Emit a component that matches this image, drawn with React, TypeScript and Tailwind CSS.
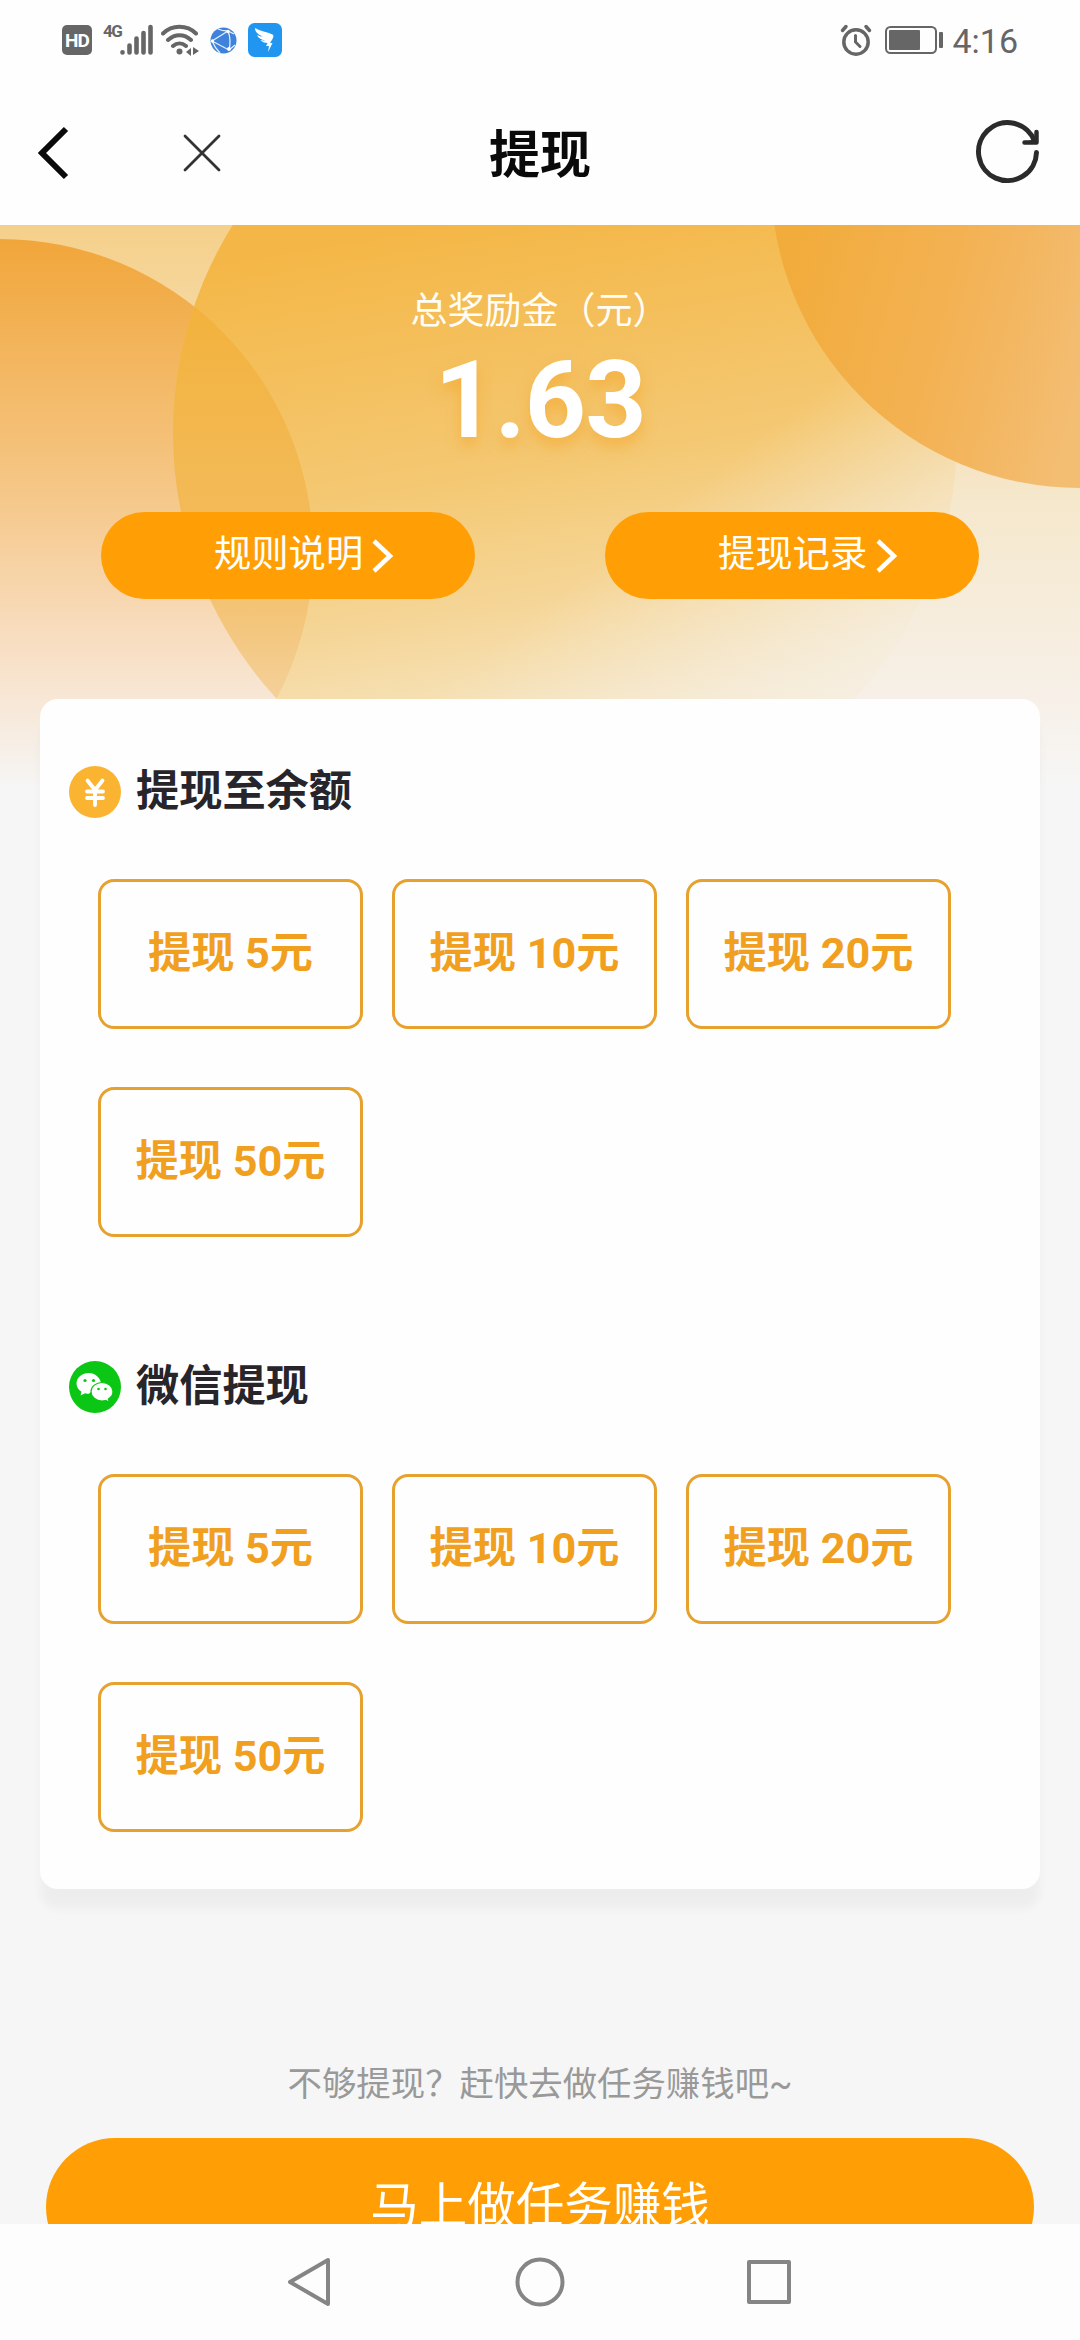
import type { ReactNode } from 'react';

const AMOUNTS = [5, 10, 20, 50];

function StatusBar() {
    return (
        <div className="flex h-20 items-center justify-between pl-[62px] pr-[62px] text-[#666]">
            <div className="flex items-center">
                <div className="flex h-[30px] w-[30px] items-center justify-center rounded-[5px] bg-[#666] text-[19px] leading-none font-bold tracking-[-1px] text-white">HD</div>
                <div className="ml-[11px] h-[30px] w-[17px] text-[17px] leading-[13px] font-bold tracking-[-1.500px]">4G</div>
                <svg width="34" height="32" viewBox="0 0 34 32" stroke="currentColor" strokeWidth="4.600" strokeLinecap="round">
                    <path d="M2.500 28.500v-.2M9.500 28.500v-7M16.500 28.500v-14M23.500 28.500V9M30.500 28.500V3" />
                </svg>
                <svg className="ml-[7px]" width="38" height="32" viewBox="0 0 38 32" fill="none" stroke="currentColor" strokeWidth="4" strokeLinecap="round">
                    <path d="M2 9.500C11 .500 26 .500 35 9.500M7 16C14 9.500 23 9.500 30 16M12 22C16 18.500 21 18.500 25 22" />
                    <circle cx="18.500" cy="27.500" r="3" fill="currentColor" stroke="none" />
                    <path d="M30 24v8l-5-4zM32 23v8l6-4z" fill="currentColor" stroke="none" />
                </svg>
                <svg className="ml-[11px]" width="27" height="27" viewBox="0 0 27 27">
                    <circle cx="13.500" cy="13.500" r="13" fill="#3f82db" />
                    <path d="M2 14L18 4M2 14l17 9M18 4q3.500 9 1 19M8 2q4 2 10 2l6 3M2 14q3 7 8 12M19 23l6-5" fill="none" stroke="#e3efff" strokeWidth="1.300" />
                    <g fill="#fff"><circle cx="2.500" cy="14" r="1.700" /><circle cx="18" cy="4.500" r="1.700" /><circle cx="19" cy="22" r="1.900" /></g>
                </svg>
                <svg className="ml-[11px]" width="34" height="34" viewBox="0 0 34 34">
                    <rect width="34" height="34" rx="6.500" fill="#2196f0" />
                    <path d="M7 5c5 3 12 4 17.500 6.500 1.500.8 1 2.500 0 4.500l-2.500 4h2.500L20 29l1-6h-3l1.500-3c-3 0-5.500-1-7-3 2 .5 4 .5 5 .5C13 16.500 10 15 9 12c2 1 4 1.500 6 1.500C10 11.500 7 9 7 5z" fill="#fff" />
                </svg>
            </div>
            <div className="flex items-center">
                <svg width="32" height="32" viewBox="0 0 32 32" fill="none" stroke="currentColor" strokeWidth="3.500" strokeLinecap="round">
                    <circle cx="16" cy="18" r="12.200" />
                    <path d="M15.500 11.500V18l4.500 4.500" strokeWidth="3" />
                    <path d="M2.500 6.500l3.500-4M26 2.500l3.500 4" />
                </svg>
                <svg className="ml-[13px]" width="58" height="28" viewBox="0 0 58 28">
                    <rect x="1" y="1" width="50" height="26" rx="4.500" fill="none" stroke="currentColor" strokeWidth="2" />
                    <rect x="4" y="4" width="31" height="20" rx="1" fill="currentColor" />
                    <rect x="54" y="6" width="4" height="16" rx="1" fill="currentColor" />
                </svg>
                <span className="mt-[2px] ml-[9px] text-[34px] leading-none">4:16</span>
            </div>
        </div>
    );
}

function TitleBar() {
    return (
        <header className="grid h-[145px] grid-cols-3 items-center pr-[38px] pl-[38px]">
            <div className="flex items-center">
                <svg width="34" height="54" viewBox="0 0 34 54" fill="none" stroke="#0a0a0a" strokeWidth="6">
                    <path d="M28 3L4 27l24 24" />
                </svg>
                <svg className="ml-[111px]" width="38" height="38" viewBox="0 0 38 38" fill="none" stroke="#333" strokeWidth="2.800" strokeLinecap="round">
                    <path d="M2 2l34 34M36 2L2 36" />
                </svg>
            </div>
            <h1 className="pt-[5px] text-center text-[51px] leading-none font-bold text-[#0a0a0a]">提现</h1>
            <svg className="justify-self-end" width="66" height="66" viewBox="0 0 66 66" fill="none" stroke="#2b2b2b" strokeWidth="5" strokeLinecap="round" strokeLinejoin="round">
                <path d="M60.500 32.500A29 29 0 1 1 58.500 21" />
                <path d="M60.500 12v10.500H48.500M60.500 12" strokeWidth="4.500" />
                <path d="M61 14v8.500h-10l6-2z" fill="#2b2b2b" strokeWidth="2" />
            </svg>
        </header>
    );
}

// 头图背景：三个渐变圆
function HeroBackground() {
    return (
        <svg className="absolute top-0 left-0" width="1080" height="560" viewBox="0 225 1080 560">
            <defs>
                <linearGradient id="base" x1="0" y1="0" x2="0" y2="1">
                    <stop offset="0" stopColor="#f5d08a" />
                    <stop offset="0.5" stopColor="#f5e8cd" />
                    <stop offset="0.85" stopColor="#f7f0e8" />
                    <stop offset="1" stopColor="#f6f6f6" />
                </linearGradient>
                <linearGradient id="left" x1="0" y1="239" x2="0" y2="785" gradientUnits="userSpaceOnUse">
                    <stop offset="0" stopColor="#f1a63a" />
                    <stop offset="0.45" stopColor="#f5c685" />
                    <stop offset="0.75" stopColor="#f8dfc4" />
                    <stop offset="1" stopColor="#f6f5f4" />
                </linearGradient>
                <linearGradient id="center" x1="450" y1="225" x2="540" y2="770" gradientUnits="userSpaceOnUse">
                    <stop offset="0" stopColor="#f4b747" />
                    <stop offset="0.45" stopColor="#f4c872" />
                    <stop offset="0.7" stopColor="#f5d698" />
                    <stop offset="1" stopColor="#f6ead0" />
                </linearGradient>
                <linearGradient id="centerFade" x1="640" y1="530" x2="820" y2="760" gradientUnits="userSpaceOnUse">
                    <stop offset="0" stopColor="#f6efe4" stopOpacity="0" />
                    <stop offset="1" stopColor="#f6efe4" stopOpacity="0.95" />
                </linearGradient>
                <linearGradient id="overlap" x1="0" y1="300" x2="0" y2="700" gradientUnits="userSpaceOnUse">
                    <stop offset="0" stopColor="#f2b23c" />
                    <stop offset="0.6" stopColor="#f3bb5c" />
                    <stop offset="1" stopColor="#f4d09a" />
                </linearGradient>
                <linearGradient id="right" x1="780" y1="300" x2="1080" y2="380" gradientUnits="userSpaceOnUse">
                    <stop offset="0" stopColor="#f2ac3c" />
                    <stop offset="0.5" stopColor="#f3b151" />
                    <stop offset="1" stopColor="#f3bd72" />
                </linearGradient>
                <clipPath id="leftClip"><circle cx="0" cy="552" r="313" /></clipPath>
            </defs>
            <rect y="225" width="1080" height="560" fill="url(#base)" />
            <circle cx="0" cy="552" r="313" fill="url(#left)" />
            <circle cx="565" cy="433" r="392" fill="url(#center)" />
            <circle cx="565" cy="433" r="392" fill="url(#centerFade)" />
            <circle cx="565" cy="433" r="392" fill="url(#overlap)" clipPath="url(#leftClip)" />
            <circle cx="1080" cy="179" r="309" fill="url(#right)" />
        </svg>
    );
}

function PillButton({ label }: { label: string }) {
    return (
        <button type="button" className="flex h-[87px] w-[374px] items-center rounded-full bg-[#ff9f05] pb-px pl-[113px] text-[37.300px] leading-none text-white">
            {label}
            <svg className="mt-px ml-[7px]" width="26" height="36" viewBox="0 0 26 36" fill="none" stroke="#fff" strokeWidth="4.500">
                <path d="M4 3l16 15L4 33" />
            </svg>
        </button>
    );
}

function WithdrawSection({ icon, title }: { icon: ReactNode; title: string }) {
    return (
        <section>
            <div className="flex h-[52px] items-center pl-[29px]">
                {icon}
                <h2 className="ml-[15px] pb-px text-[43.200px] leading-none font-bold text-[#27252a]">{title}</h2>
            </div>
            <div className="mt-[61px] flex flex-wrap gap-x-[29px] gap-y-[58px] pl-[58px]">
                {AMOUNTS.map(amount => (
                    <button
                        key={amount}
                        type="button"
                        className="flex h-[150px] w-[265px] items-center justify-center rounded-[16px] border-[3px] border-[#e6a12f] pb-px text-[43.200px] leading-none font-bold text-[#f0a01e]"
                    >
                        提现 {amount}元
                    </button>
                ))}
            </div>
        </section>
    );
}

function YuanIcon() {
    return (
        <svg width="52" height="52" viewBox="0 0 52 52" fill="none">
            <circle cx="26" cy="26" r="26" fill="#fbb432" />
            <path d="M18.500 14.500l7.500 9.500 7.500-9.500M26 24v15M18 25.500h16M18 32h16" stroke="#fff" strokeWidth="3.800" strokeLinecap="round" strokeLinejoin="round" />
        </svg>
    );
}

function WechatIcon() {
    return (
        <svg width="52" height="52" viewBox="0 0 52 52">
            <circle cx="26" cy="26" r="26" fill="#0bc614" />
            <path d="M20 12C13 12 7.500 16.500 7.500 22.500c0 3.500 2 6.500 5 8.300L11.500 34.500l4.500-2.200c1.500.4 2.500.5 4 .5L32 22C31 16.500 26 12 20 12z" fill="#fff" />
            <path d="M33 21.500c-6 0-11 4-11 9.200s5 9.300 11 9.300c1.300 0 2.500-.2 3.700-.5l3.600 1.800-.9-3.300c2.700-1.700 4.600-4.300 4.600-7.300 0-5.200-5-9.200-11-9.200z" fill="#fff" stroke="#0bc614" strokeWidth="1.200" />
            <g fill="#0bc614">
                <circle cx="16" cy="19.500" r="1.600" />
                <circle cx="24.500" cy="19.500" r="1.600" />
                <circle cx="29.500" cy="28" r="1.300" />
                <circle cx="36.500" cy="28" r="1.300" />
            </g>
        </svg>
    );
}

function NavBar() {
    return (
        <nav className="flex h-[116px] items-center justify-center gap-[180px] bg-[#fdfdfd] text-[#858585]">
            <svg width="50" height="50" viewBox="0 0 50 50" fill="none" stroke="currentColor" strokeWidth="4" strokeLinejoin="round">
                <path d="M43 3v44L5 25z" />
            </svg>
            <svg width="50" height="50" viewBox="0 0 50 50" fill="none" stroke="currentColor" strokeWidth="4">
                <circle cx="25" cy="25" r="22.500" />
            </svg>
            <svg width="50" height="50" viewBox="0 0 50 50" fill="none" stroke="currentColor" strokeWidth="4" strokeLinejoin="round">
                <rect x="4" y="5" width="40" height="40" />
            </svg>
        </nav>
    );
}

export default function App() {
    return (
        <div className="flex h-[2340px] w-[1080px] flex-col overflow-hidden bg-white font-['Roboto','Noto_Sans_CJK_SC',sans-serif]">
            <div className="flex h-[225px] flex-col bg-[#fefefe]">
                <StatusBar />
                <TitleBar />
            </div>

            <main className="relative h-[1999px] overflow-hidden bg-[#f6f6f6]">
                <HeroBackground />
                <div className="relative flex flex-col">
                    <div className="flex h-[474px] flex-col items-center">
                        <p className="mt-[65px] text-[37px] leading-[44px] text-[#fffdf5]">总奖励金（元）</p>
                        <p className="mt-[13px] text-[107px] leading-[108px] font-bold tracking-[-1px] text-white [text-shadow:0_8px_14px_rgba(245,160,30,0.5)]">1.63</p>
                        <div className="mt-[57px] flex w-full justify-between pr-[101px] pl-[101px]">
                            <PillButton label="规则说明" />
                            <PillButton label="提现记录" />
                        </div>
                    </div>

                    <div className="mx-[40px] flex h-[1190px] flex-col gap-[124px] rounded-[18px] bg-[#fefefe] pt-[67px] shadow-[0_20px_10px_rgba(0,0,0,0.035)]">
                        <WithdrawSection icon={<YuanIcon />} title="提现至余额" />
                        <WithdrawSection icon={<WechatIcon />} title="微信提现" />
                    </div>

                    <p className="mt-[173px] text-center text-[34.400px] leading-[44px] text-[#999]">不够提现？赶快去做任务赚钱吧~</p>
                    <button type="button" className="mx-[46px] mt-[32px] h-[138px] rounded-full bg-[#ff9f05] text-[48.500px] leading-none text-white">
                        马上做任务赚钱
                    </button>
                </div>
            </main>

            <NavBar />
        </div>
    );
}
